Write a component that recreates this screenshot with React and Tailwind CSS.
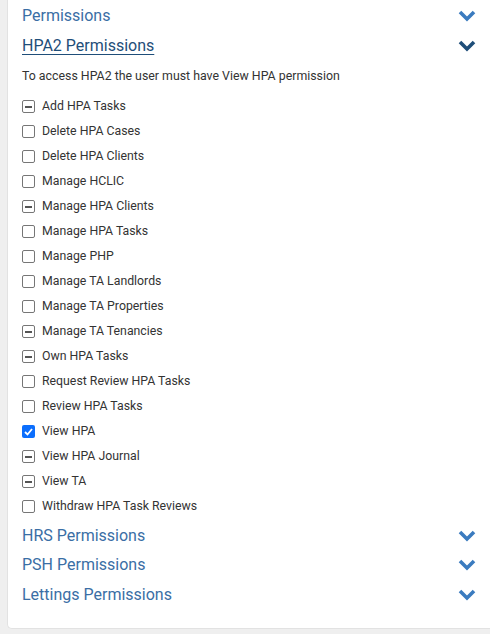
import React from 'react';

const items = [
  ['Add HPA Tasks', 'mixed'],
  ['Delete HPA Cases', 'off'],
  ['Delete HPA Clients', 'off'],
  ['Manage HCLIC', 'off'],
  ['Manage HPA Clients', 'mixed'],
  ['Manage HPA Tasks', 'off'],
  ['Manage PHP', 'off'],
  ['Manage TA Landlords', 'off'],
  ['Manage TA Properties', 'off'],
  ['Manage TA Tenancies', 'mixed'],
  ['Own HPA Tasks', 'mixed'],
  ['Request Review HPA Tasks', 'off'],
  ['Review HPA Tasks', 'off'],
  ['View HPA', 'on'],
  ['View HPA Journal', 'mixed'],
  ['View TA', 'mixed'],
  ['Withdraw HPA Task Reviews', 'off'],
];

const Chevron = ({ dark }) => (
  <svg width="18" height="12" viewBox="0 0 18 12" className={dark ? 'text-[#1f4e79]' : 'text-[#3b7bbf]'}>
    <polyline points="2,2 9,9 16,2" fill="none" stroke="currentColor" strokeWidth="3.6" strokeLinejoin="miter" />
  </svg>
);

const Box = ({ state }) => {
  if (state === 'on') {
    return (
      <span className="w-[13px] h-[13px] rounded-[2px] bg-[#0b6efd] flex items-center justify-center">
        <svg width="9" height="8" viewBox="0 0 9 8">
          <polyline points="1,4 3.5,6.5 8,1" fill="none" stroke="white" strokeWidth="1.8" />
        </svg>
      </span>
    );
  }
  return (
    <span className="w-[13px] h-[13px] rounded-[2px] border border-[#767676] bg-white flex items-center justify-center">
      {state === 'mixed' && <span className="w-[7px] h-[2px] bg-[#555]" />}
    </span>
  );
};

const Header = ({ title, open, tight }) => (
  <div className={`${tight ? 'h-[29.5px]' : 'h-[30px]'} flex items-center justify-between pr-[14px]`}>
    <span className={open ? 'text-[16px] text-[#1f4e79] underline underline-offset-[3px] decoration-1' : 'text-[16px] text-[#3a6ea5]'}>
      {title}
    </span>
    <Chevron dark={open} />
  </div>
);

export default function App() {
  return (
    <div className="w-[490px] h-[634px] bg-[#efefef] pl-[7px] overflow-hidden" style={{ fontFamily: 'Roboto, "Liberation Sans", sans-serif' }}>
      <div className="bg-white h-[629px] rounded-bl-[5px] border-l border-b border-[#e2e2e2] pl-[14px] pt-[1px]">
        <Header title="Permissions" />
        <Header title="HPA2 Permissions" open />
        <p className="h-[30px] flex items-center text-[12.35px] text-[#333]">
          To access HPA2 the user must have View HPA permission
        </p>
        <div className="flex flex-col mt-[3px]">
          {items.map(([label, state]) => (
            <div key={label} className="h-[25px] flex items-center gap-[7px]">
              <Box state={state} />
              <span className="text-[12.3px] text-[#333]">{label}</span>
            </div>
          ))}
        </div>
        <div className="pt-[2px]">
          <Header title="HRS Permissions" tight />
          <Header title="PSH Permissions" tight />
          <Header title="Lettings Permissions" tight />
        </div>
      </div>
    </div>
  );
}
